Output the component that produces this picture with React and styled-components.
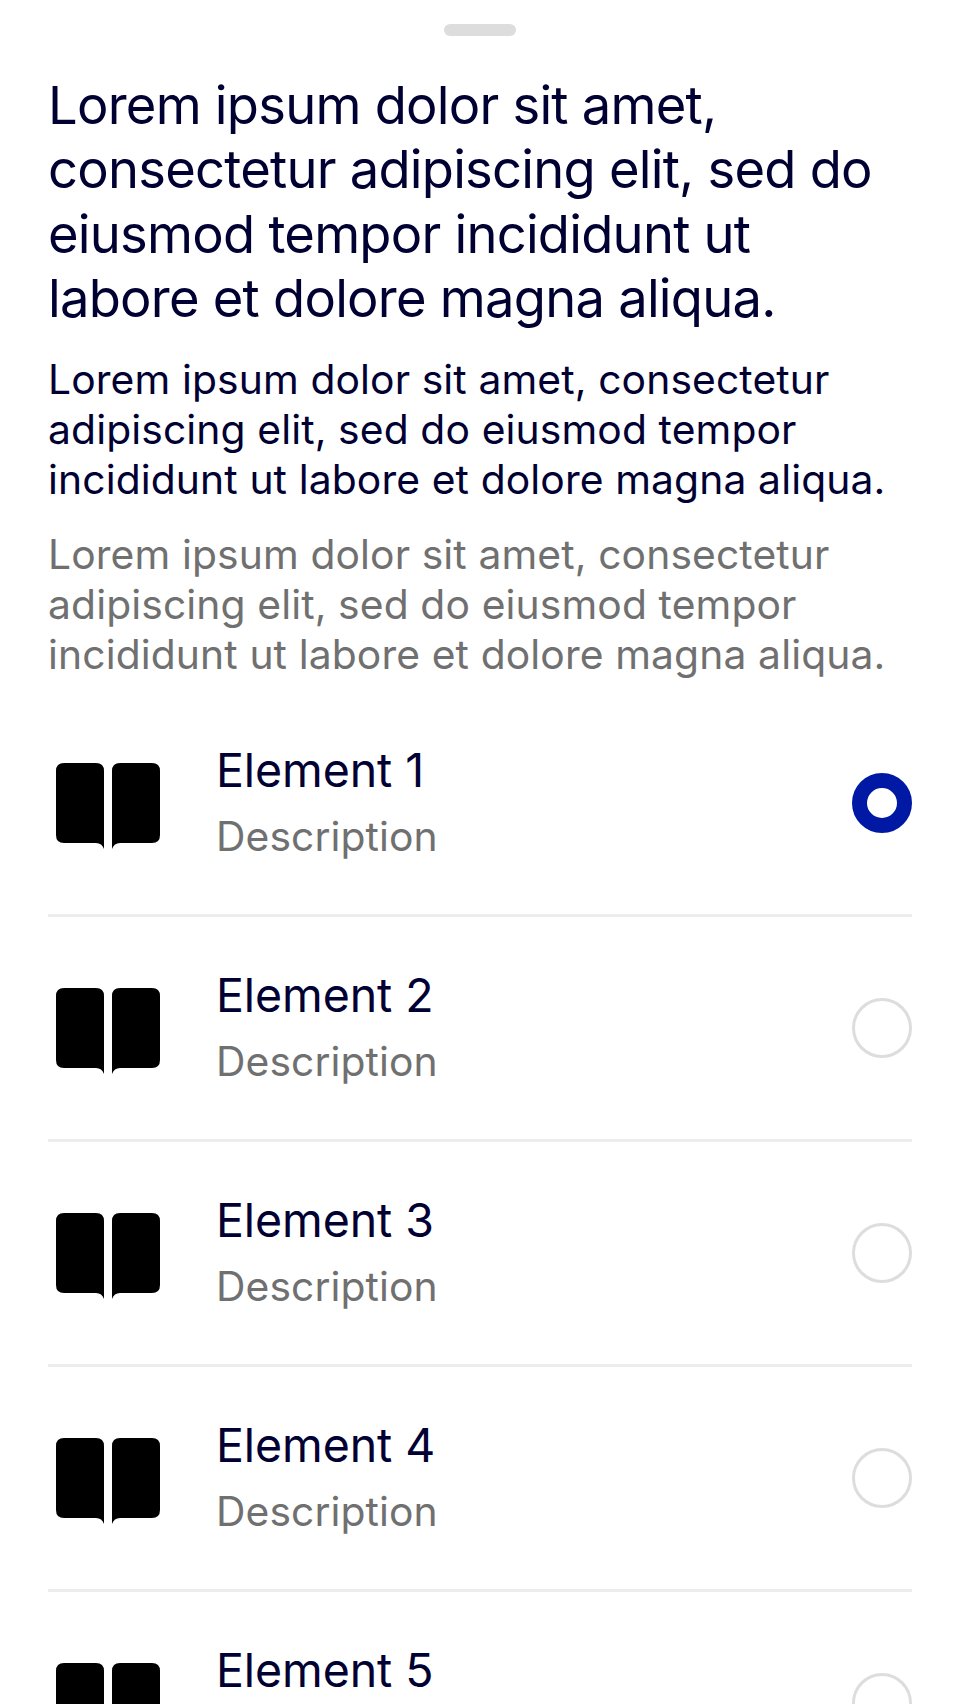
import React from 'react';
import styled, { createGlobalStyle } from 'styled-components';

const GlobalStyle = createGlobalStyle`
  * { box-sizing: border-box; }
  html, body { margin: 0; background: #fff; }
  body { height: 1704px; overflow: hidden; }
`;
const Sheet = styled.main`
  width: 960px;
  height: 1704px;
  overflow: hidden;
  padding: 24px 48px 0;
  background: #fff;
  color: #000033;
  font-family: Inter, "Liberation Sans", sans-serif;
`;
const Handle = styled.div`
  width: 72px;
  height: 12px;
  margin: 0 auto;
  border-radius: 6px;
  background: #ddd;
`;
const Title = styled.h1`
  margin: 37px 0 0;
  font-size: 52.5px;
  font-weight: 400;
  line-height: 64.4px;
  letter-spacing: -0.76px;
  white-space: nowrap;
`;
const Paragraph = styled.p`
  margin: ${({ $top }) => $top}px 0 0;
  font-size: 40.8px;
  line-height: 50px;
  letter-spacing: 0.12px;
  white-space: nowrap;
  color: ${({ $muted }) => ($muted ? '#707070' : '#000033')};
`;
const List = styled.ul`
  list-style: none;
  margin: 13px 0 0;
  padding: 0;
`;
const Row = styled.li`
  display: flex;
  height: 225px;
  border-bottom: 3px solid #ededed;
`;
const BookIcon = styled.svg`
  flex: none;
  width: 120px;
  height: 120px;
  margin-top: 51px;
`;
const Copy = styled.div`
  flex: 1;
  padding: 48px 0 0 48px;
`;
const Name = styled.div`
  font-size: 46.5px;
  line-height: 60px;
  letter-spacing: -0.1px;
`;
const Description = styled.div`
  margin-top: 8px;
  font-size: 40.8px;
  line-height: 56px;
  letter-spacing: 0.1px;
  color: #707070;
`;
const Radio = styled.span`
  flex: none;
  width: 60px;
  height: 60px;
  margin-top: 81px;
  border-radius: 50%;
  border: ${({ $on }) => ($on ? '15px solid #0019a5' : '3px solid #ddd')};
`;

export default function App() {
  return (
    <>
      <GlobalStyle />
      <Sheet>
        <Handle />
        <Title>Lorem ipsum dolor sit amet,<br />consectetur adipiscing elit, sed do<br />eiusmod tempor incididunt ut<br />labore et dolore magna aliqua.</Title>
        <Paragraph $top={23}>Lorem ipsum dolor sit amet, consectetur<br />adipiscing elit, sed do eiusmod tempor<br />incididunt ut labore et dolore magna aliqua.</Paragraph>
        <Paragraph $top={25} $muted>Lorem ipsum dolor sit amet, consectetur<br />adipiscing elit, sed do eiusmod tempor<br />incididunt ut labore et dolore magna aliqua.</Paragraph>
        <List>
          {[1, 2, 3, 4, 5].map((n) => (
            <Row key={n}>
              <BookIcon viewBox="0 0 120 120">
                <path d="M16 20H48Q56 20 56 28V106Q54 100 48 100H16Q8 100 8 92V28Q8 20 16 20Z" />
                <path d="M72 20H104Q112 20 112 28V92Q112 100 104 100H72Q66 100 64 106V28Q64 20 72 20Z" />
              </BookIcon>
              <Copy>
                <Name>Element {n}</Name>
                <Description>Description</Description>
              </Copy>
              <Radio $on={n === 1} />
            </Row>
          ))}
        </List>
      </Sheet>
    </>
  );
}
